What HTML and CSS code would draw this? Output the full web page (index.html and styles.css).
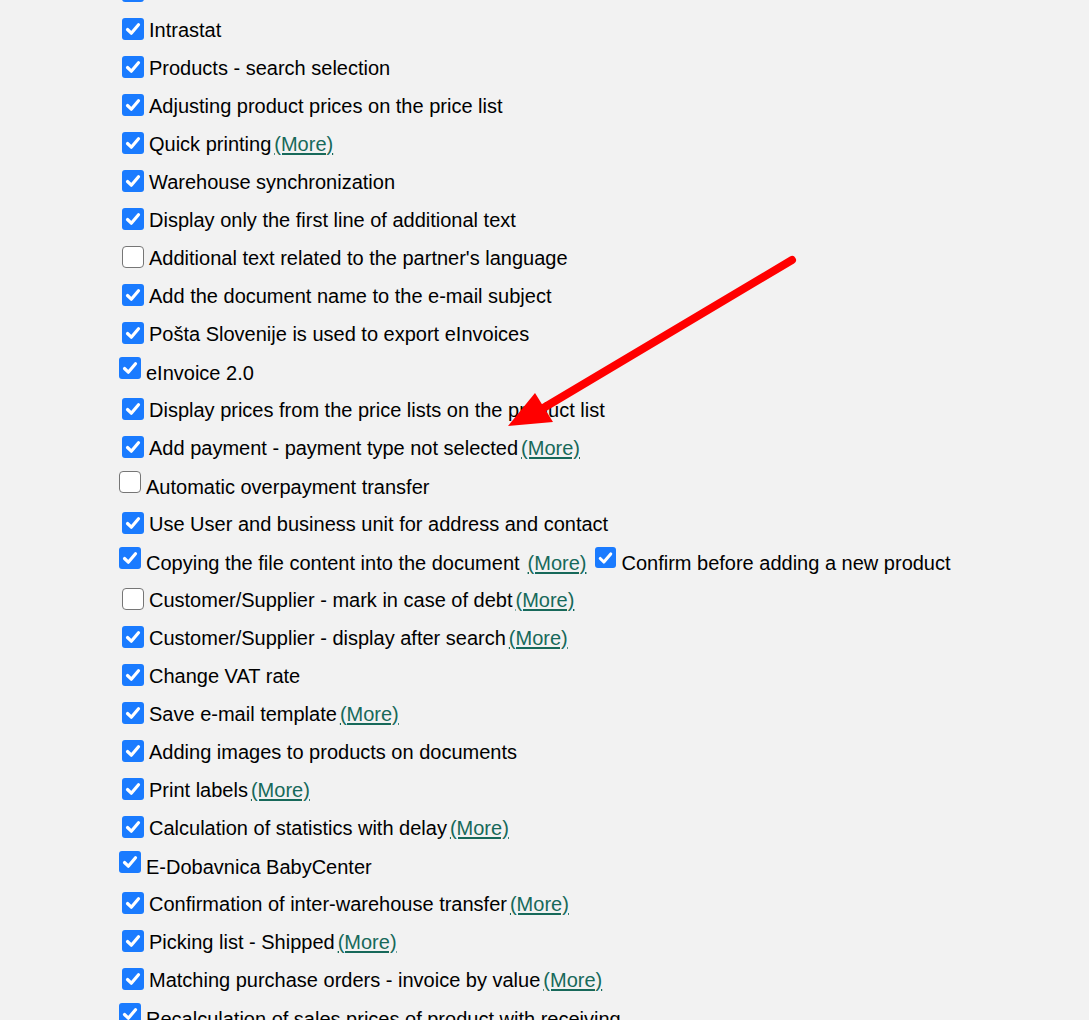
FILE: index.html
```html
<!DOCTYPE html>
<html lang="en">
<head>
<meta charset="utf-8">
<title>Settings</title>
<link rel="stylesheet" href="styles.css">
</head>
<body>
<div class="page">
  <div class="list">
    <div class="row"><span class="cb on"><svg viewBox="0 0 22 22"><path d="M5.5 11.5 9.3 15.2 16.5 6.8"/></svg></span><span class="label"></span></div>
    <div class="row"><span class="cb on"><svg viewBox="0 0 22 22"><path d="M5.5 11.5 9.3 15.2 16.5 6.8"/></svg></span><span class="label">Intrastat</span></div>
    <div class="row"><span class="cb on"><svg viewBox="0 0 22 22"><path d="M5.5 11.5 9.3 15.2 16.5 6.8"/></svg></span><span class="label">Products - search selection</span></div>
    <div class="row"><span class="cb on"><svg viewBox="0 0 22 22"><path d="M5.5 11.5 9.3 15.2 16.5 6.8"/></svg></span><span class="label">Adjusting product prices on the price list</span></div>
    <div class="row"><span class="cb on"><svg viewBox="0 0 22 22"><path d="M5.5 11.5 9.3 15.2 16.5 6.8"/></svg></span><span class="label">Quick printing</span><a class="more" href="#">(More)</a></div>
    <div class="row"><span class="cb on"><svg viewBox="0 0 22 22"><path d="M5.5 11.5 9.3 15.2 16.5 6.8"/></svg></span><span class="label">Warehouse synchronization</span></div>
    <div class="row"><span class="cb on"><svg viewBox="0 0 22 22"><path d="M5.5 11.5 9.3 15.2 16.5 6.8"/></svg></span><span class="label">Display only the first line of additional text</span></div>
    <div class="row"><span class="cb"></span><span class="label">Additional text related to the partner's language</span></div>
    <div class="row"><span class="cb on"><svg viewBox="0 0 22 22"><path d="M5.5 11.5 9.3 15.2 16.5 6.8"/></svg></span><span class="label">Add the document name to the e-mail subject</span></div>
    <div class="row"><span class="cb on"><svg viewBox="0 0 22 22"><path d="M5.5 11.5 9.3 15.2 16.5 6.8"/></svg></span><span class="label">Pošta Slovenije is used to export eInvoices</span></div>
    <div class="row alt"><span class="cb on"><svg viewBox="0 0 22 22"><path d="M5.5 11.5 9.3 15.2 16.5 6.8"/></svg></span><span class="label">eInvoice 2.0</span></div>
    <div class="row"><span class="cb on"><svg viewBox="0 0 22 22"><path d="M5.5 11.5 9.3 15.2 16.5 6.8"/></svg></span><span class="label">Display prices from the price lists on the product list</span></div>
    <div class="row"><span class="cb on"><svg viewBox="0 0 22 22"><path d="M5.5 11.5 9.3 15.2 16.5 6.8"/></svg></span><span class="label">Add payment - payment type not selected</span><a class="more" href="#">(More)</a></div>
    <div class="row alt"><span class="cb"></span><span class="label">Automatic overpayment transfer</span></div>
    <div class="row"><span class="cb on"><svg viewBox="0 0 22 22"><path d="M5.5 11.5 9.3 15.2 16.5 6.8"/></svg></span><span class="label">Use User and business unit for address and contact</span></div>
    <div class="row alt"><span class="cb on"><svg viewBox="0 0 22 22"><path d="M5.5 11.5 9.3 15.2 16.5 6.8"/></svg></span><span class="label">Copying the file content into the document</span><a class="more wide" href="#">(More)</a><span class="cb on second"><svg viewBox="0 0 22 22"><path d="M5.5 11.5 9.3 15.2 16.5 6.8"/></svg></span><span class="label">Confirm before adding a new product</span></div>
    <div class="row"><span class="cb"></span><span class="label">Customer/Supplier - mark in case of debt</span><a class="more" href="#">(More)</a></div>
    <div class="row"><span class="cb on"><svg viewBox="0 0 22 22"><path d="M5.5 11.5 9.3 15.2 16.5 6.8"/></svg></span><span class="label">Customer/Supplier - display after search</span><a class="more" href="#">(More)</a></div>
    <div class="row"><span class="cb on"><svg viewBox="0 0 22 22"><path d="M5.5 11.5 9.3 15.2 16.5 6.8"/></svg></span><span class="label">Change VAT rate</span></div>
    <div class="row"><span class="cb on"><svg viewBox="0 0 22 22"><path d="M5.5 11.5 9.3 15.2 16.5 6.8"/></svg></span><span class="label">Save e-mail template</span><a class="more" href="#">(More)</a></div>
    <div class="row"><span class="cb on"><svg viewBox="0 0 22 22"><path d="M5.5 11.5 9.3 15.2 16.5 6.8"/></svg></span><span class="label">Adding images to products on documents</span></div>
    <div class="row"><span class="cb on"><svg viewBox="0 0 22 22"><path d="M5.5 11.5 9.3 15.2 16.5 6.8"/></svg></span><span class="label">Print labels</span><a class="more" href="#">(More)</a></div>
    <div class="row"><span class="cb on"><svg viewBox="0 0 22 22"><path d="M5.5 11.5 9.3 15.2 16.5 6.8"/></svg></span><span class="label">Calculation of statistics with delay</span><a class="more" href="#">(More)</a></div>
    <div class="row alt"><span class="cb on"><svg viewBox="0 0 22 22"><path d="M5.5 11.5 9.3 15.2 16.5 6.8"/></svg></span><span class="label">E-Dobavnica BabyCenter</span></div>
    <div class="row"><span class="cb on"><svg viewBox="0 0 22 22"><path d="M5.5 11.5 9.3 15.2 16.5 6.8"/></svg></span><span class="label">Confirmation of inter-warehouse transfer</span><a class="more" href="#">(More)</a></div>
    <div class="row"><span class="cb on"><svg viewBox="0 0 22 22"><path d="M5.5 11.5 9.3 15.2 16.5 6.8"/></svg></span><span class="label">Picking list - Shipped</span><a class="more" href="#">(More)</a></div>
    <div class="row"><span class="cb on"><svg viewBox="0 0 22 22"><path d="M5.5 11.5 9.3 15.2 16.5 6.8"/></svg></span><span class="label">Matching purchase orders - invoice by value</span><a class="more" href="#">(More)</a></div>
    <div class="row alt"><span class="cb on"><svg viewBox="0 0 22 22"><path d="M5.5 11.5 9.3 15.2 16.5 6.8"/></svg></span><span class="label">Recalculation of sales prices of product with receiving</span></div>
  </div>
  <svg class="arrow" width="1089" height="1020" viewBox="0 0 1089 1020">
    <line x1="792" y1="260" x2="540" y2="410" />
    <polygon points="508,426 535,393 553,422" />
  </svg>
</div>
</body>
</html>
```
FILE: styles.css
```css
html, body {
  margin: 0;
  padding: 0;
  background: #f2f2f2;
  overflow: hidden;
}

.page {
  position: relative;
  width: 1089px;
  height: 1020px;
  overflow: hidden;
  font-family: "Liberation Sans", Arial, sans-serif;
  font-size: 20px;
  color: #000;
}

.list {
  margin-top: -27px;
  padding-left: 122px;
  display: flex;
  flex-direction: column;
}

.row {
  display: flex;
  align-items: center;
  height: 38px;
  white-space: nowrap;
}

.label {
  line-height: 23px;
  margin-left: 5px;
}

.cb {
  flex: none;
  width: 22px;
  height: 22px;
  box-sizing: border-box;
  border-radius: 4px;
  background: #fff;
  border: 1.5px solid #767676;
  margin-bottom: 2px;
  display: flex;
}

.cb.on {
  background: #1a7bff;
  border: none;
  border-radius: 3px;
}

.cb svg {
  width: 22px;
  height: 22px;
  fill: none;
  stroke: #fff;
  stroke-width: 3.2;
  stroke-linecap: round;
  stroke-linejoin: round;
}

.alt .cb {
  margin-left: -3px;
  margin-bottom: 9px;
}

.alt .label,
.alt .more {
  margin-top: 2px;
}

.alt .cb.second {
  margin-left: 9px;
  width: 21px;
  height: 21px;
}

.more {
  line-height: 23px;
  margin-left: 3px;
  color: #17695a;
  text-decoration: underline;
  text-decoration-thickness: 2px;
  text-underline-offset: 2px;
}

.more.wide {
  margin-left: 8px;
}

.arrow {
  position: absolute;
  left: 0;
  top: 0;
  pointer-events: none;
}

.arrow line {
  stroke: #ff0000;
  stroke-width: 8;
  stroke-linecap: round;
}

.arrow polygon {
  fill: #ff0000;
}
```
